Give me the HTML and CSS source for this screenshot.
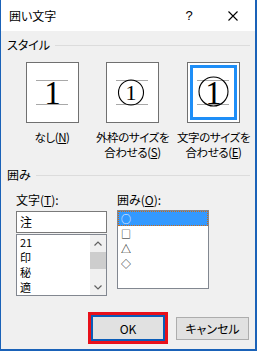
FILE: index.html
```html
<!DOCTYPE html>
<html lang="ja">
<head>
<meta charset="utf-8">
<title>囲い文字</title>
<link rel="stylesheet" href="styles.css">
</head>
<body>
<div class="window">
  <div class="titlebar">
    <span class="title">囲い文字</span>
    <span class="help">?</span>
    <svg class="close" width="10" height="10" viewBox="0 0 10 10"><path d="M0.5 0.5L9.5 9.5M9.5 0.5L0.5 9.5" stroke="#000" stroke-width="1.1" fill="none"/></svg>
  </div>
  <div class="content">
    <div class="group-head">スタイル</div>
    <div class="styles">
      <div class="style-col">
        <div class="style-box">
          <svg width="51" height="59" viewBox="0 0 51 59">
            <path d="M9 17.5H41M9 41.5H41" stroke="#a8a8a8" stroke-width="1"/>
            <text x="25.5" y="40.5" text-anchor="middle" class="digit" font-size="33">1</text>
          </svg>
        </div>
        <div class="style-label">なし(<u>N</u>)</div>
      </div>
      <div class="style-col">
        <div class="style-box">
          <svg width="51" height="59" viewBox="0 0 51 59">
            <path d="M9 17.5H41M9 41.5H41" stroke="#a8a8a8" stroke-width="1"/>
            <circle cx="24" cy="29.5" r="12.5" stroke="#000" stroke-width="1.1" fill="none"/>
            <text x="24" y="37" text-anchor="middle" class="digit" font-size="22">1</text>
          </svg>
        </div>
        <div class="style-label">外枠のサイズを<br>合わせる(<u>S</u>)</div>
      </div>
      <div class="style-col">
        <div class="style-box selected">
          <svg width="51" height="59" viewBox="0 0 51 59">
            <path d="M9 17.5H41M9 41.5H41" stroke="#a8a8a8" stroke-width="1"/>
            <circle cx="25.5" cy="28.5" r="14.5" stroke="#000" stroke-width="1.1" fill="none"/>
            <text x="25.5" y="40.5" text-anchor="middle" class="digit" font-size="33">1</text>
          </svg>
        </div>
        <div class="style-label">文字のサイズを<br>合わせる(<u>E</u>)</div>
      </div>
    </div>
    <div class="group-head second">囲み</div>
    <div class="enclose">
      <div class="enc-col">
        <div class="field-label">文字(<u>T</u>):</div>
        <div class="text-input">注</div>
        <div class="char-list">
          <div class="items">
            <div>21</div>
            <div>印</div>
            <div>秘</div>
            <div>適</div>
          </div>
          <div class="scrollbar">
            <div class="arrow"><svg width="8" height="5" viewBox="0 0 8 5"><path d="M0.5 4.5L4 1L7.5 4.5" stroke="#606060" stroke-width="1.2" fill="none"/></svg></div>
            <div class="thumb"></div>
            <div class="track"></div>
            <div class="arrow"><svg width="8" height="5" viewBox="0 0 8 5"><path d="M0.5 0.5L4 4L7.5 0.5" stroke="#606060" stroke-width="1.2" fill="none"/></svg></div>
          </div>
        </div>
      </div>
      <div class="enc-col">
        <div class="field-label">囲み(<u>O</u>):</div>
        <div class="shape-list">
          <div class="shape active">○</div>
          <div class="shape">□</div>
          <div class="shape">△</div>
          <div class="shape">◇</div>
        </div>
      </div>
    </div>
    <div class="footer">
      <div class="ok-frame"><div class="btn btn-ok">OK</div></div>
      <div class="btn btn-cancel">キャンセル</div>
    </div>
  </div>
</div>
</body>
</html>
```

FILE: styles.css
```css
* { box-sizing: border-box; margin: 0; padding: 0; }
html, body { width: 257px; height: 351px; overflow: hidden; }
body {
  font-family: "Noto Sans CJK JP", "Noto Sans", sans-serif;
  font-size: 12px;
  color: #000;
  font-feature-settings: "palt";
  background: #fff;
}
u { text-decoration: underline; text-underline-offset: 1px; }

.window {
  width: 257px;
  height: 351px;
  border-style: solid;
  border-color: #1a62b8;
  border-width: 0 2px 2px 1px;
  display: flex;
  flex-direction: column;
}

.titlebar {
  flex: none;
  height: 31px;
  background: #fff;
  display: flex;
  align-items: center;
  padding: 0 17px 0 8px;
}
.title { line-height: 16px; }
.help {
  margin-left: auto;
  width: 10px;
  text-align: center;
  font-family: "Liberation Sans", sans-serif;
  font-size: 13px;
  line-height: 16px;
}
.close { margin-left: 34px; display: block; }

.content {
  flex: 1;
  background: #f0f0f0;
  padding-top: 6px;
  display: flex;
  flex-direction: column;
}

.group-head {
  display: flex;
  align-items: center;
  height: 16px;
  line-height: 16px;
  padding: 0 5px 0 6px;
}
.group-head::after {
  content: "";
  flex: 1;
  height: 1px;
  background: #dcdcdc;
  margin-left: 5px;
}
.group-head.second { margin-top: 7px; }

.styles {
  margin-top: 9px;
  display: grid;
  grid-template-columns: 80px 81px 81px;
  padding-left: 11px;
}
.style-col {
  display: flex;
  flex-direction: column;
  align-items: center;
}
.style-box {
  width: 53px;
  height: 61px;
  border: 1px solid #707070;
  background: #fff;
}
.style-box svg { display: block; }
.style-box.selected {
  box-shadow: inset 0 0 0 2px #fff, inset 0 0 0 5px #1e8ef7;
}
.digit { font-family: "Liberation Serif", serif; fill: #000; }
.style-label {
  margin-top: 7px;
  font-size: 11.5px;
  letter-spacing: -0.4px;
  line-height: 15px;
  text-align: center;
  white-space: nowrap;
}

.enclose {
  margin-top: 9px;
  padding-left: 15px;
  display: grid;
  grid-template-columns: 91px 92px;
  column-gap: 10px;
}
.field-label { height: 18px; line-height: 16px; }

.text-input {
  margin-top: 1px;
  height: 22px;
  border: 1px solid #7a7a7a;
  background: #fff;
  padding-left: 3px;
  line-height: 20px;
}
.char-list {
  margin-top: 1px;
  height: 62px;
  border: 1px solid #828790;
  background: #fff;
  display: flex;
}
.items {
  flex: 1;
  padding-left: 3px;
  font-size: 11px;
  line-height: 15px;
}
.items div { height: 15px; }
.scrollbar {
  width: 16px;
  display: flex;
  flex-direction: column;
  background: #f0f0f0;
}
.arrow {
  height: 16px;
  display: flex;
  align-items: center;
  justify-content: center;
}
.arrow svg { display: block; }
.thumb { height: 17px; margin: 1px 0 0; background: #cdcdcd; }
.track { flex: 1; }

.shape-list {
  height: 79px;
  border: 1px solid #828790;
  background: #fff;
}
.shape {
  height: 15px;
  line-height: 15px;
  padding-left: 3px;
  font-size: 10px;
}
.shape.active {
  background: #3399ff;
  color: #fff;
  border: 1px dotted #d06a10;
  padding-left: 2px;
  line-height: 13px;
}

.footer {
  margin-top: auto;
  display: flex;
  justify-content: flex-end;
  align-items: center;
  gap: 8px;
  padding: 0 6px 5px 0;
}
.ok-frame {
  width: 80px;
  height: 32px;
  border: 3px solid #e8101a;
}
.btn {
  display: flex;
  align-items: center;
  justify-content: center;
  background: #e1e1e1;
}
.btn-ok {
  width: 74px;
  height: 26px;
  border: 2px solid #0a5cb8;
}
.btn-cancel {
  width: 73px;
  height: 23px;
  border: 1px solid #adadad;
}
```
